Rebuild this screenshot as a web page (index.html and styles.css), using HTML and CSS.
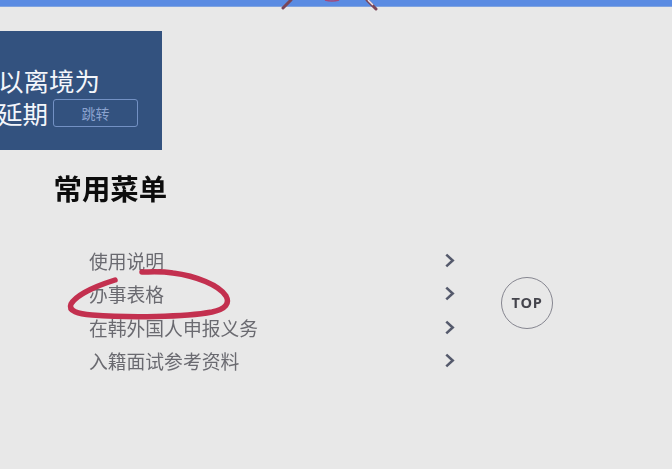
FILE: index.html
```html
<!DOCTYPE html>
<html lang="zh">
<head>
<meta charset="utf-8">
<title>常用菜单</title>
<link rel="stylesheet" href="styles.css">
</head>
<body>
<div class="page">
  <header class="topbar"></header>
  <section class="banner">
    <div class="line">可以离境为</div>
    <div class="line line-action"><span>可延期</span><a class="jump">跳转</a></div>
  </section>
  <h2 class="title">常用菜单</h2>
  <div class="content">
    <ul class="menu">
      <li class="item"><span>使用说明</span><svg class="chev" viewBox="0 0 10 14"><path d="M2 1.5 8 7 2 12.5"/></svg></li>
      <li class="item"><span>办事表格</span><svg class="chev" viewBox="0 0 10 14"><path d="M2 1.5 8 7 2 12.5"/></svg></li>
      <li class="item"><span>在韩外国人申报义务</span><svg class="chev" viewBox="0 0 10 14"><path d="M2 1.5 8 7 2 12.5"/></svg></li>
      <li class="item"><span>入籍面试参考资料</span><svg class="chev" viewBox="0 0 10 14"><path d="M2 1.5 8 7 2 12.5"/></svg></li>
    </ul>
    <a class="top">TOP</a>
  </div>
  <svg class="ink" viewBox="0 0 672 469">
    <path class="red" d="M115 280C96 286 76 295 71 304C68 311 78 314 92 315C130 318 185 317 212 312C226 309 230 303 226 296C219 285 196 276 173 273C160 271 150 272 142 272"/>
    <path class="mark" d="M283 8 291 0"/>
    <path class="mark" d="M376 9 367 0"/>
    <path class="mark-light" d="M373 5 368 0"/>
    <path class="arc" d="M325 0Q332 2 339 0"/>
  </svg>
</div>
</body>
</html>
```
FILE: styles.css
```css
* { box-sizing: border-box; }
html, body { margin: 0; padding: 0; }
body {
  background: #e8e8e8;
  font-family: "Noto Sans CJK SC", "Noto Sans", sans-serif;
  overflow: hidden;
}
.page {
  position: relative;
  width: 672px;
  height: 469px;
  overflow: hidden;
  filter: blur(0.35px);
}
.topbar {
  height: 7px;
  background: #5a8be2;
  border-bottom: 1px solid #7fa3e0;
}
.banner {
  width: 162px;
  height: 119px;
  margin-top: 24px;
  background: #33527f;
  color: #f4f6fb;
  font-size: 25.5px;
  font-weight: 400;
  line-height: 33px;
  padding: 32px 0 0;
  overflow: hidden;
  white-space: nowrap;
}
.line { margin-left: -27.5px; }
.line-action {
  margin-left: -28.5px;
  display: flex;
  align-items: center;
  gap: 5px;
}
.jump {
  width: 85px;
  height: 28px;
  border: 1px solid #7391c4;
  border-radius: 3px;
  color: #8ba3cf;
  font-size: 14px;
  font-weight: 400;
  line-height: 26px;
  text-align: center;
}
.title {
  margin: 20px 0 0 53.5px;
  font-size: 28.4px;
  line-height: 36px;
  font-weight: 700;
  color: #0c0c0c;
}
.content {
  display: flex;
  align-items: center;
  margin: 38px 0 0 89px;
}
.menu {
  list-style: none;
  margin: 0;
  padding: 0;
  width: 366px;
}
.item {
  height: 33.33px;
  display: flex;
  align-items: center;
  justify-content: space-between;
  font-size: 18.8px;
  color: #6a6a70;
  white-space: nowrap;
}
.chev {
  width: 11px;
  height: 15px;
  fill: none;
  stroke: #555a6c;
  stroke-width: 2.4;
}
.top {
  width: 52px;
  height: 52px;
  margin: 0 0 16px 46px;
  border: 1.5px solid #85858f;
  border-radius: 50%;
  color: #44444c;
  font-family: "Open Sans", sans-serif;
  font-size: 14.5px;
  font-weight: 700;
  letter-spacing: 0.6px;
  line-height: 49px;
  text-align: center;
}
.ink {
  position: absolute;
  left: 0;
  top: 0;
  width: 672px;
  height: 469px;
  fill: none;
  pointer-events: none;
}
.red {
  stroke: #c3304f;
  stroke-width: 5.5;
  stroke-linecap: round;
}
.mark {
  stroke: #7a4658;
  stroke-width: 3;
  stroke-linecap: round;
}
.mark-light {
  stroke: #f0e6ea;
  stroke-width: 1.5;
}
.arc {
  stroke: #a34a7a;
  stroke-width: 1.5;
}
```
